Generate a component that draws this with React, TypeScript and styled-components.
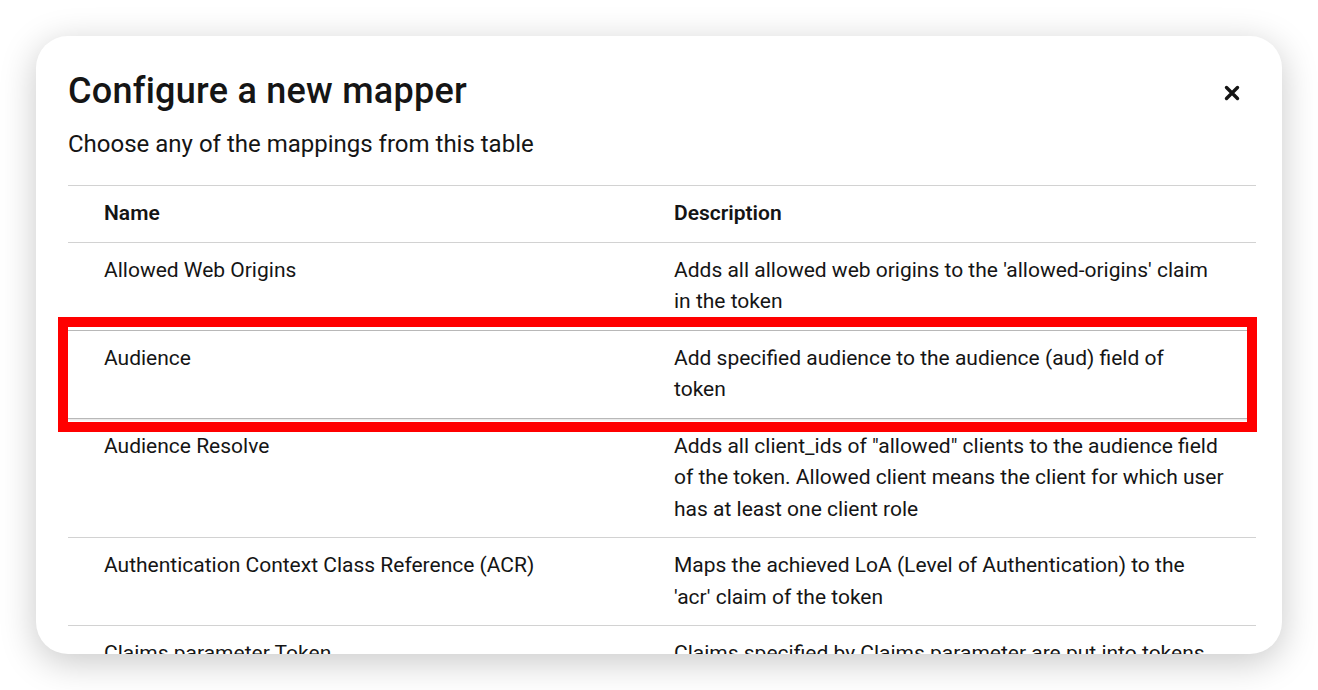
import styled, { createGlobalStyle } from "styled-components"

const GlobalStyle = createGlobalStyle`
	html, body {
		margin: 0;
		padding: 0;
		background: #ffffff;
		font-family: Roboto, "Liberation Sans", sans-serif;
		color: #151515;
	}
	* {
		box-sizing: border-box;
	}
`

// descriptions are kept as the lines the dialog wraps them to
const mappers = [
	{
		name: "Allowed Web Origins",
		description: ["Adds all allowed web origins to the 'allowed-origins' claim", "in the token"],
	},
	{
		name: "Audience",
		description: ["Add specified audience to the audience (aud) field of", "token"],
		highlighted: true,
	},
	{
		name: "Audience Resolve",
		description: [
			'Adds all client_ids of "allowed" clients to the audience field',
			"of the token. Allowed client means the client for which user",
			"has at least one client role",
		],
	},
	{
		name: "Authentication Context Class Reference (ACR)",
		description: ["Maps the achieved LoA (Level of Authentication) to the", "'acr' claim of the token"],
	},
	{
		name: "Claims parameter Token",
		description: ["Claims specified by Claims parameter are put into tokens", "or userinfo endpoint"],
	},
]

const CloseIcon = () => (
	<svg width="16" height="16" viewBox="0 0 16 16" fill="none">
		<path d="M2.5 2.5 L13.5 13.5 M13.5 2.5 L2.5 13.5" stroke="#151515" strokeWidth="3.4" strokeLinecap="round" />
	</svg>
)

const App = () => {
	return (
		<Page>
			<GlobalStyle />
			<Modal>
				<ModalHeader>
					<Title>Configure a new mapper</Title>
					<CloseButton aria-label="Close">
						<CloseIcon />
					</CloseButton>
				</ModalHeader>
				<Subtitle>Choose any of the mappings from this table</Subtitle>
				<Table>
					<HeadRow>
						<NameCell>Name</NameCell>
						<DescCell>Description</DescCell>
					</HeadRow>
					{mappers.map((m) => (
						<Row key={m.name} $highlighted={m.highlighted}>
							<NameCell>{m.name}</NameCell>
							<DescCell>
								{m.description.map((line) => (
									<Line key={line}>{line}</Line>
								))}
							</DescCell>
						</Row>
					))}
				</Table>
			</Modal>
		</Page>
	)
}

export default App

const Page = styled.div`
	height: 690px;
	padding: 36px 36px 0 36px;
	overflow: hidden;
`

const Modal = styled.div`
	width: 1246px;
	height: 618px;
	background: #ffffff;
	border-radius: 32px;
	box-shadow: 0 8px 36px rgba(0, 0, 0, 0.22);
	padding: 31px 26px 0 32px;
	overflow: hidden;
`

const ModalHeader = styled.div`
	display: flex;
	align-items: center;
	justify-content: space-between;
`

const Title = styled.h1`
	margin: 0;
	font-size: 36px;
	line-height: 47px;
	font-weight: 500;
	letter-spacing: 0.25px;
`

const CloseButton = styled.button`
	width: 48px;
	height: 44px;
	border: none;
	background: transparent;
	display: flex;
	align-items: center;
	justify-content: center;
	padding: 0;
	margin-top: 4px;
	cursor: pointer;
`

const Subtitle = styled.p`
	margin: 11px 0 0 0;
	font-size: 24px;
	line-height: 36px;
	font-weight: 400;
`

const Table = styled.div`
	margin-top: 23px;
	border-top: 1px solid #d2d2d2;
	font-size: 21px;
	line-height: 31.5px;
`

const HeadRow = styled.div`
	display: grid;
	grid-template-columns: 582px 1fr;
	border-bottom: 1px solid #d2d2d2;
	font-weight: 600;
`

const Row = styled.div<{ $highlighted?: boolean }>`
	position: relative;
	display: grid;
	grid-template-columns: 582px 1fr;
	border-bottom: 1px solid ${(p) => (p.$highlighted ? "#b8b8b8" : "#d2d2d2")};
	box-shadow: ${(p) => (p.$highlighted ? "0 -1px 0 0 #b8b8b8, 0 1px 2px rgba(0,0,0,0.12)" : "none")};
	z-index: ${(p) => (p.$highlighted ? 1 : 0)};

	&::after {
		content: "";
		display: ${(p) => (p.$highlighted ? "block" : "none")};
		position: absolute;
		top: -14px;
		bottom: -14px;
		left: -10px;
		right: -1px;
		border: 10px solid #ff0000;
		pointer-events: none;
	}
`

const NameCell = styled.div`
	padding: 12px 24px 12px 36px;
`

const DescCell = styled.div`
	padding: 12px 20px 12px 24px;
`

const Line = styled.span`
	display: block;
	white-space: nowrap;
`
